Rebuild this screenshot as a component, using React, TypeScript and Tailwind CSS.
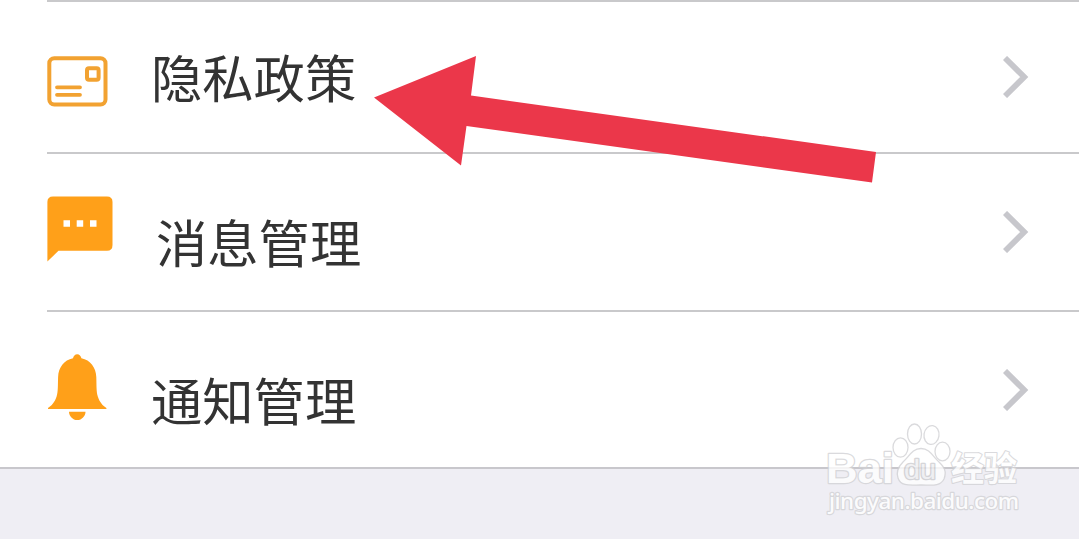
import type { ReactNode } from 'react';

function CardIcon() {
  return (
    <svg className="block h-[51px] w-[61px]" viewBox="0 0 61 51" fill="none" stroke="#f2a231">
      <rect x="2.3" y="2.3" width="56.2" height="46.2" rx="5" strokeWidth="4" />
      <rect x="40" y="12.2" width="11.6" height="11.6" rx="2" strokeWidth="4" />
      <path d="M10 31.3H33M10 38.8H33" strokeWidth="3.8" strokeLinecap="round" />
    </svg>
  );
}

function MessageIcon() {
  return (
    <svg className="block h-[66px] w-[66px]" viewBox="0 0 66 66">
      <path d="M6 0.5H60Q65.5 0.5 65.5 6V49Q65.5 54.8 60 54.8H11.5L0.4 65.5V6Q0.4 0.5 6 0.5Z" fill="#ffa019" />
      <path d="M16.5 24.2h6.5v6.5h-6.5zM29.7 24.2h6.5v6.5h-6.5zM43 24.2h6.5v6.5h-6.5z" fill="#fff" />
    </svg>
  );
}

function BellIcon() {
  return (
    <svg className="block h-[68px] w-[60px]" viewBox="0 0 60 68" fill="#ffa019">
      <path d="M30.2 1.2C28 1.2 26.4 2.9 26 5.2C17 7 11.4 14.5 11.1 24C10.8 33 11.2 38 9.6 43.5C7.8 49.3 4.5 52.8 1 55V56H59.4V55C55.9 52.8 52.6 49.3 50.8 43.5C49.2 38 49.6 33 49.3 24C49 14.5 43.4 7 34.4 5.2C34 2.9 32.4 1.2 30.2 1.2Z" />
      <path d="M22 58.7H38.5C38.4 63.2 34.8 67 30.2 67S22.1 63.2 22 58.7Z" />
    </svg>
  );
}

function Chevron({ className }: { className: string }) {
  return (
    <svg className={`block h-[42px] w-[26px] ${className}`} viewBox="0 0 26 42" fill="none">
      <path d="M2 2L21.2 21L2 40" stroke="#c7c7cc" strokeWidth="5.8" />
    </svg>
  );
}

interface RowProps {
  icon: ReactNode;
  label: string;
  height: string;
  iconTop: string;
  labelSpace: string;
  chevronTop: string;
}

function Row({ icon, label, height, iconTop, labelSpace, chevronTop }: RowProps) {
  return (
    <div className={`flex items-start pr-[50px] ${height}`}>
      <div className={`w-[66px] shrink-0 ${iconTop}`}>{icon}</div>
      <div className={`flex-1 text-[51.3px] leading-[60px] whitespace-nowrap text-[#333] ${labelSpace}`}>{label}</div>
      <Chevron className={chevronTop} />
    </div>
  );
}

function Arrow() {
  return (
    <svg className="absolute top-[50px] left-[370px] h-[140px] w-[510px]" viewBox="370 50 510 140">
      <path d="M374 97.5L476 56L471 95.5L876 152L872 182.5L466.5 126L461 165.5Z" fill="#eb374a" />
    </svg>
  );
}

function Watermark() {
  return (
    <svg
      className="absolute top-[415px] left-[820px] h-[105px] w-[210px] opacity-80"
      viewBox="820 415 210 105"
      fill="#fff"
      stroke="#d2d2d5"
      strokeWidth="1.3"
      strokeLinejoin="round"
    >
      <text x="826" y="483" fontSize="42" fontWeight="700" textLength="68" lengthAdjust="spacingAndGlyphs" paintOrder="stroke" strokeWidth="2.4" fontFamily="'Liberation Sans', sans-serif">Bai</text>
      <ellipse cx="900.5" cy="447.5" rx="7.5" ry="9.7" />
      <ellipse cx="914.5" cy="434" rx="7" ry="10" />
      <ellipse cx="931.5" cy="435" rx="7.5" ry="9.5" transform="rotate(8 931.5 435)" />
      <ellipse cx="942.5" cy="451.5" rx="7.5" ry="9.3" />
      <path d="M921 448.5C912 448.5 909 457 903 462C898 467 896 472 898 478C901 487 911 485 921 485S940 487 944 479C947 471 944 467 939 462C933 457 930 448.5 921 448.5Z" />
      <text x="904" y="479" fontSize="27" fontWeight="400" textLength="32" lengthAdjust="spacingAndGlyphs" fill="#f0f0f2" stroke="#cdcdd0" strokeWidth="2.6" paintOrder="stroke" fontFamily="'Liberation Sans', sans-serif">du</text>
      <text x="951" y="481" fontSize="34" fontWeight="700" textLength="66" lengthAdjust="spacingAndGlyphs" paintOrder="stroke" strokeWidth="2.2" fontFamily="'Noto Sans CJK SC', sans-serif">经验</text>
      <text x="829" y="509" fontSize="22.5" textLength="190" lengthAdjust="spacing" paintOrder="stroke" strokeWidth="2.4" fontWeight="500" fontFamily="'Noto Sans', sans-serif">jingyan.baidu.com</text>
    </svg>
  );
}

export default function App() {
  return (
    <main className="relative flex h-[539px] w-[1079px] flex-col overflow-hidden bg-[#efeef4] font-['Noto_Sans_CJK_SC',sans-serif]">
      <section className="h-[469px] border-b-2 border-[#c8c7cc] bg-white pl-[47px]">
        <div className="divide-y-2 divide-[#c9c9cb] border-t-2 border-[#c9c9cb]">
          <Row icon={<CardIcon />} label="隐私政策" height="h-[152px]" iconTop="pt-[54px]" labelSpace="pt-[44px] pl-[38px]" chevronTop="mt-[54px]" />
          <Row icon={<MessageIcon />} label="消息管理" height="h-[158px]" iconTop="pt-[42px]" labelSpace="pt-[57px] pl-[43px]" chevronTop="mt-[57px]" />
          <Row icon={<BellIcon />} label="通知管理" height="h-[155px]" iconTop="pt-[41px]" labelSpace="pt-[57px] pl-[38px]" chevronTop="mt-[57px]" />
        </div>
      </section>
      <Arrow />
      <Watermark />
    </main>
  );
}
